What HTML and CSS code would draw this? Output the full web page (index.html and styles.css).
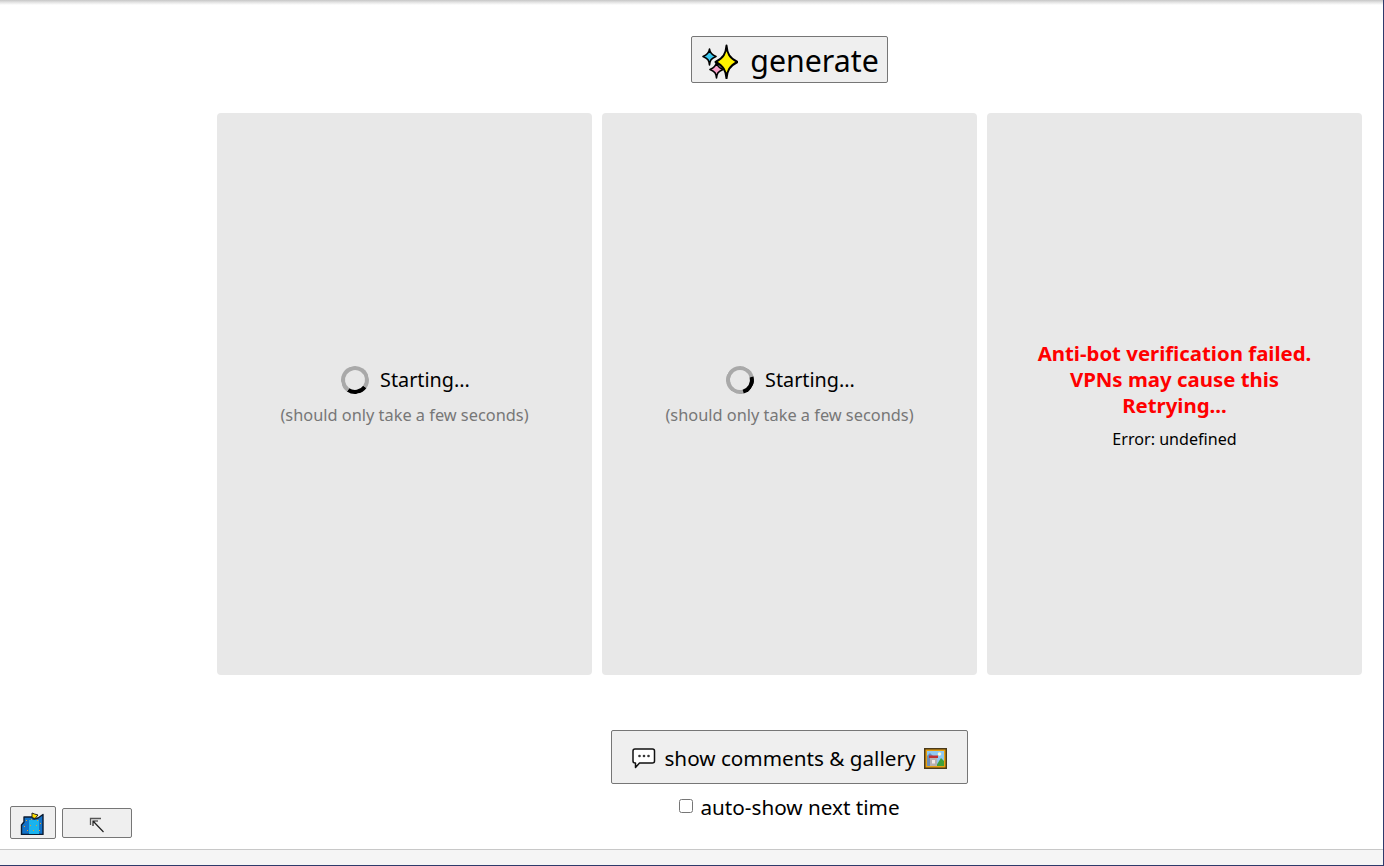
FILE: index.html
```html
<!DOCTYPE html>
<html lang="en">
<head>
<meta charset="utf-8">
<title>generate</title>
<link rel="stylesheet" href="styles.css">
</head>
<body>
<div class="window">
  <div class="top-shade"></div>
  <div class="main">
    <div class="side"></div>
    <div class="content">
      <button class="btn generate-btn" type="button">
        <svg class="sparkle" viewBox="0 0 36 36" width="36" height="36">
          <path d="M7.500 6c.4 3.500 1.500 5.500 6.500 7.500c-5 2-6.100 4-6.500 8.500c-.4-4.500-1.500-6.500-6.500-8.500c5-2 6.100-4 6.500-7.500z" fill="#3cc8f0" stroke="#000" stroke-width="1.600" stroke-linejoin="round"/>
          <path d="M14.500 19c.4 3.500 1.500 5.500 6.500 7.500c-5 2-6.100 4-6.500 8.500c-.4-4.500-1.500-6.500-6.500-8.500c5-2 6.100-4 6.500-7.500z" fill="#f8a0c8" stroke="#000" stroke-width="1.600" stroke-linejoin="round"/>
          <path d="M24.500 2.500c.6 8 3 12.500 11 16.500c-8 4-10.400 8.500-11 16.500c-.6-8-3-12.500-11-16.500c8-4 10.400-8.500 11-16.500z" fill="#fff200" stroke="#000" stroke-width="2" stroke-linejoin="round"/>
        </svg>
        <span>generate</span>
      </button>
      <div class="cards">
        <div class="card">
          <div class="status">
            <span class="spinner spinner-bottom"></span>
            <span class="status-text">Starting...</span>
          </div>
          <div class="hint">(should only take a few seconds)</div>
        </div>
        <div class="card">
          <div class="status">
            <span class="spinner spinner-right"></span>
            <span class="status-text">Starting...</span>
          </div>
          <div class="hint">(should only take a few seconds)</div>
        </div>
        <div class="card">
          <div class="error-title">Anti-bot verification failed.<br>VPNs may cause this<br>Retrying...</div>
          <div class="error-detail">Error: undefined</div>
        </div>
      </div>
      <button class="btn comments-btn" type="button">
        <svg class="bubble" viewBox="0 0 24 22" width="24" height="22">
          <path d="M3.500 2h17c1 0 2 1 2 2v10c0 1-1 2-2 2h-13l-4 4.500v-4.500h-.5c-1 0-2-1-2-2v-10c0-1 1-2 2-2z" fill="#fff" stroke="#111" stroke-width="1.500" stroke-linejoin="round"/>
          <circle cx="7.500" cy="9" r="1.300" fill="#333"/><circle cx="12" cy="9" r="1.300" fill="#333"/><circle cx="16.500" cy="9" r="1.300" fill="#333"/>
        </svg>
        <span>show comments &amp; gallery</span>
        <svg class="picture" viewBox="0 0 23 21" width="23" height="21">
          <rect width="23" height="21" fill="#4a3a1a"/>
          <rect x="1.500" y="1.500" width="20" height="18" fill="#e8a010"/>
          <rect x="3" y="3" width="17" height="15" fill="#8fc8f0"/>
          <circle cx="15.500" cy="6" r="1.800" fill="#fff8d0"/>
          <path d="M3 8l3-3 3 3v10h-6z" fill="#6c8db8"/>
          <path d="M12 18l5-8 3 3v5z" fill="#3fa03a"/>
          <rect x="5" y="7.500" width="9" height="2.500" fill="#c03030"/>
          <rect x="6" y="10" width="7" height="8" fill="#b8b0b0"/>
          <rect x="8" y="12" width="3" height="3.500" fill="#f0e8e8"/>
        </svg>
      </button>
      <label class="auto-show"><input type="checkbox" class="auto-check"><span>auto-show next time</span></label>
    </div>
  </div>
  <div class="status-bar"></div>
  <button class="btn float-btn gift-btn" type="button">
    <svg viewBox="0 0 24 24" width="24" height="24">
      <path d="M1.500 23.500V14L4 11V6H12L14 8L18 7L23 3.500V23.500Z" fill="#1272c8" stroke="#0a1a30" stroke-width="1.400" stroke-linejoin="round"/>
      <rect x="9" y="9" width="10" height="14" fill="#19b3ee"/>
      <g fill="#e0a030">
        <rect x="6" y="9" width="1" height="1"/><rect x="11" y="8" width="1" height="1"/><rect x="17" y="9" width="1" height="1"/>
        <rect x="4" y="15" width="1" height="1"/><rect x="10" y="14" width="1" height="1"/><rect x="16" y="14" width="1" height="1"/><rect x="20" y="12" width="1" height="1"/>
        <rect x="7" y="19" width="1" height="1"/><rect x="13" y="19" width="1" height="1"/><rect x="19" y="19" width="1" height="1"/>
      </g>
      <path d="M12 2l2.500 1 3.500 1-3 3.500-3-1z" fill="#ffe000" stroke="#222" stroke-width="1"/>
    </svg>
  </button>
  <button class="btn float-btn arrow-btn" type="button">
    <svg viewBox="0 0 16 16" width="16" height="16">
      <path d="M1.500 8V1.500H12" fill="none" stroke="#555" stroke-width="1.300"/>
      <path d="M14.500 15L4 4M4 9V4H9" fill="none" stroke="#222" stroke-width="1.200"/>
    </svg>
  </button>
</div>
</body>
</html>
```

FILE: styles.css
```css
* {
  box-sizing: border-box;
}

html,
body {
  margin: 0;
  height: 100%;
  background: #fff;
}

body {
  font-family: "Noto Sans", "Open Sans", sans-serif;
  color: #000;
  overflow: hidden;
}

.window {
  position: relative;
  display: flex;
  flex-direction: column;
  width: 1384px;
  height: 866px;
  border-right: 1px solid #2f3a6b;
  border-bottom: 1px solid #2f3a6b;
}

.top-shade {
  height: 5px;
  flex: none;
  background: linear-gradient(#c6c6c6, #e0e0e0 40%, #ffffff);
}

.main {
  flex: 1;
  display: flex;
  min-height: 0;
}

.side {
  width: 217px;
  flex: none;
}

.content {
  width: 1145px;
  flex: none;
  display: flex;
  flex-direction: column;
  align-items: center;
  padding-top: 31px;
}

.btn {
  display: flex;
  align-items: center;
  justify-content: center;
  background: #efefef;
  border: 1px solid #767676;
  border-radius: 2px;
  color: #000;
  font-family: inherit;
  padding: 0;
}

.generate-btn {
  width: 197px;
  height: 47px;
  gap: 12px;
  font-size: 30.300px;
  padding: 2px 0 0 2px;
  margin-bottom: 30px;
}

.sparkle {
  flex: none;
}

.cards {
  display: flex;
  gap: 10px;
  width: 100%;
  margin-bottom: 55px;
}

.card {
  width: 375px;
  height: 562px;
  background: #e8e8e8;
  border-radius: 4px;
  display: flex;
  flex-direction: column;
  align-items: center;
  justify-content: center;
  text-align: center;
}

.status {
  display: flex;
  align-items: center;
  gap: 11px;
  font-size: 19.800px;
  line-height: 28px;
  margin: 5px 0 0 2px;
}

.spinner {
  width: 28px;
  height: 28px;
  border: 4px solid #a9a9a9;
  border-radius: 50%;
  flex: none;
}

.spinner-bottom {
  border-bottom-color: #000;
  transform: rotate(-10deg);
}

.spinner-right {
  border-right-color: #000;
  transform: rotate(30deg);
}

.hint {
  color: #777;
  font-size: 16.350px;
  line-height: 24px;
  margin-top: 9px;
}

.error-title {
  color: #f00;
  font-weight: 700;
  font-size: 20.400px;
  line-height: 26px;
  margin-top: 3px;
}

.error-detail {
  font-size: 16.100px;
  line-height: 24px;
  margin-top: 9px;
}

.comments-btn {
  width: 357px;
  height: 54px;
  gap: 8px;
  font-size: 20.700px;
  padding-top: 2px;
}

.bubble,
.picture {
  flex: none;
}

.auto-show {
  display: flex;
  align-items: center;
  font-size: 20.700px;
  line-height: 28px;
  margin-top: 9px;
}

.auto-check {
  width: 14px;
  height: 14px;
  margin: 0 7px 2px 0;
}

.status-bar {
  height: 16px;
  flex: none;
  background: #f5f5f5;
  border-top: 1px solid #c8c8c8;
}

.float-btn {
  position: absolute;
}

.gift-btn {
  left: 10px;
  top: 806px;
  width: 46px;
  height: 33px;
  padding-right: 2px;
}

.arrow-btn {
  left: 62px;
  top: 808px;
  width: 70px;
  height: 30px;
  padding-top: 4px;
}
```
